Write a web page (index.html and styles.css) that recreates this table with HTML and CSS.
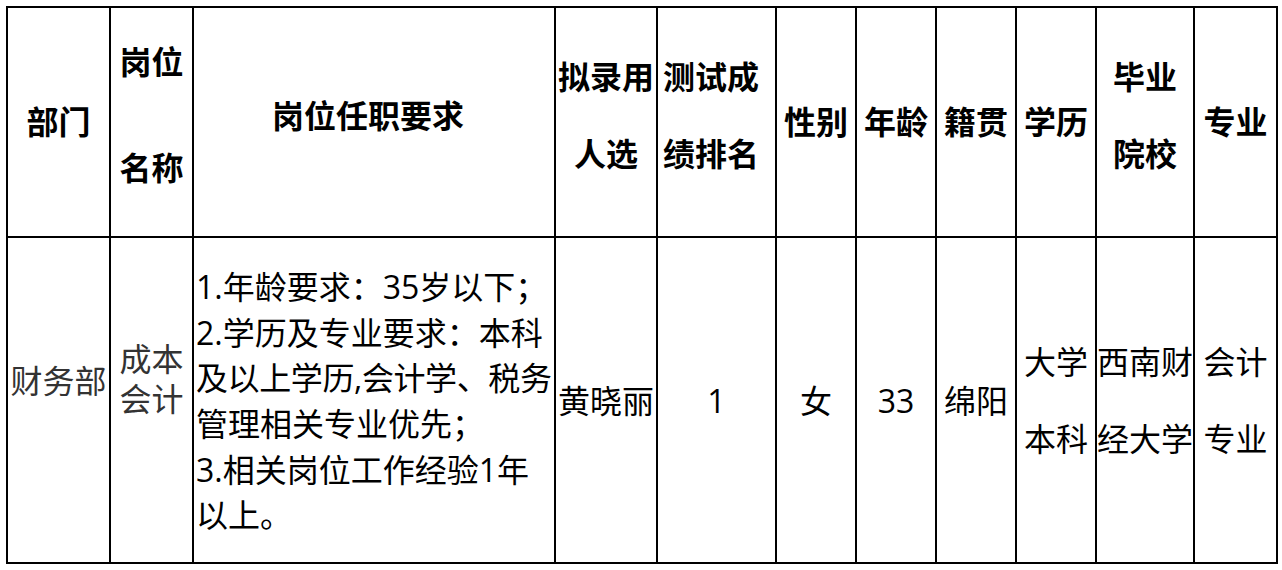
FILE: index.html
```html
<!DOCTYPE html>
<html lang="zh-CN">
<head>
<meta charset="utf-8">
<title>拟录用人选</title>
<link rel="stylesheet" href="styles.css">
</head>
<body>
<table class="grid">
  <colgroup>
    <col class="w101"><col class="w81"><col class="w360"><col class="w100"><col class="w117">
    <col class="w78"><col class="w78"><col class="w78"><col class="w78"><col class="w96"><col class="w81">
  </colgroup>
  <tr class="head">
    <td>部门</td>
    <td class="lh107 pb14">岗位<br>名称</td>
    <td class="pb12 shift12">岗位任职要求</td>
    <td class="lh77 pb12">拟录用<br>人选</td>
    <td class="lh77 pb12 shift11">测试成<br>绩排名</td>
    <td>性别</td>
    <td>年龄</td>
    <td>籍贯</td>
    <td>学历</td>
    <td class="lh77 pb12">毕业<br>院校</td>
    <td>专业</td>
  </tr>
  <tr class="body">
    <td class="grey pb38">财务部</td>
    <td class="grey lh40 pb43">成本<br>会计</td>
    <td class="req">1.年龄要求：35岁以下；<br>2.学历及专业要求：本科<br><span class="tight">及以上学历,会计学、税务</span><br>管理相关专业优先；<br>3.相关岗位工作经验1年<br>以上。</td>
    <td>黄晓丽</td>
    <td>1</td>
    <td>女</td>
    <td>33</td>
    <td>绵阳</td>
    <td class="lh77">大学<br>本科</td>
    <td class="lh77">西南财<br>经大学</td>
    <td class="lh77">会计<br>专业</td>
  </tr>
</table>
</body>
</html>
```

FILE: styles.css
```css
html, body {
  margin: 0;
  background: #ffffff;
}
body {
  padding: 6px;
}
.grid {
  border-collapse: separate;
  border-spacing: 2px;
  background: #000000;
  table-layout: fixed;
  width: 1272px;
  font-family: "Open Sans", "Noto Sans CJK SC", sans-serif;
  font-size: 32px;
  color: #000000;
}
.w101 { width: 101px; }
.w81 { width: 81px; }
.w360 { width: 360px; }
.w100 { width: 100px; }
.w117 { width: 117px; }
.w78 { width: 78px; }
.w96 { width: 96px; }
.grid td {
  background: #ffffff;
  padding: 0;
  text-align: center;
  vertical-align: middle;
  white-space: nowrap;
  line-height: 42px;
  overflow: hidden;
}
.head { height: 228px; }
.head td { font-weight: 700; }
.body { height: 324px; }
.body td { padding-top: 2px; }
.grey { color: #333333; }
.lh107 { line-height: 106.5px !important; }
.lh77 { line-height: 76.7px !important; }
.lh40 { line-height: 40px !important; }
.pb12 { padding-bottom: 12px !important; }
.pb14 { padding-bottom: 14px !important; }
.pb38 { padding-bottom: 38px !important; padding-top: 0 !important; }
.pb43 { padding-bottom: 43px !important; padding-top: 0 !important; }
.shift12 { padding-right: 12px !important; }
.shift11 { padding-right: 11px !important; }
.grid td.req {
  text-align: left;
  padding-left: 2px;
  line-height: 45.6px;
}
.tight {
  letter-spacing: -0.4px;
}
```
